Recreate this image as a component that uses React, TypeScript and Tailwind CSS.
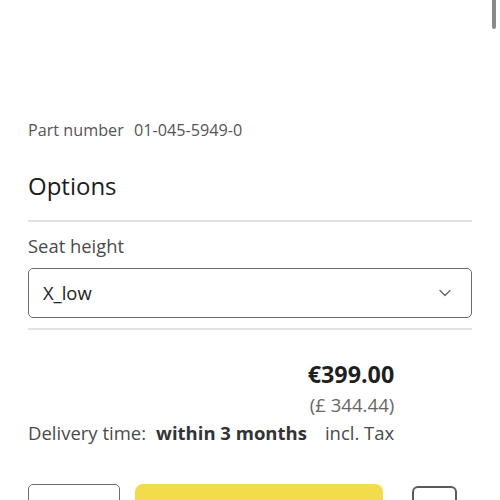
import { ChevronDown } from "lucide-react";

const font = { fontFamily: '"Open Sans", "Noto Sans", sans-serif' };

export default function App() {
  return (
    <div
      className="relative h-[500px] w-[500px] overflow-hidden bg-white px-7 pt-[118px]"
      style={font}
    >
      {/* page scroll thumb */}
      <div className="absolute right-[4px] top-0 h-[29px] w-[4px] rounded-b-full bg-[#8a8a8a]" />

      <p className="text-[16.2px] leading-6 text-[#555]">
        Part number <span className="ml-[6px]">01-045-5949-0</span>
      </p>

      <h2 className="mt-7 text-[24px] leading-8 text-[#1c1c1c]">Options</h2>

      <div className="mt-[18px] h-[2px] bg-[#e2e2e2]" />

      <label className="mt-[10px] block text-[18.4px] leading-7 text-[#4a4a4a]">Seat height</label>
      <div className="mt-2 flex h-[50px] items-center justify-between rounded-[5px] border border-[#6b6b6b] pl-[14px] pr-[16px]">
        <span className="text-[18.4px] text-[#222]">X_low</span>
        <ChevronDown className="h-[20px] w-[20px] text-[#666]" strokeWidth={1.6} />
      </div>

      <div className="mt-[10px] h-[2px] bg-[#e2e2e2]" />

      <div className="mt-[29px] w-fit">
        <div className="text-right text-[23.3px] font-bold leading-[30px] text-[#1f1f1f]">€399.00</div>
        <div className="mt-[2px] text-right text-[18.6px] leading-7 text-[#666]">(£ 344.44)</div>
        <div className="flex text-[18.5px] leading-7 text-[#4a4a4a]">
          <span>Delivery time:</span>
          <span className="ml-[10px] font-bold text-[#333]">within 3 months</span>
          <span className="ml-[18px]">incl. Tax</span>
        </div>
      </div>

      <div className="mt-[37px] flex items-start">
        <div className="h-[50px] w-[92px] rounded-[5px] border border-[#6b6b6b]" />
        <div className="ml-[15px] h-[50px] w-[248px] rounded-[8px] bg-[#f3dc4b]" />
        <div className="ml-[29px] mt-[2px] h-[46px] w-[45px] rounded-[6px] border-2 border-[#5a5a5a]" />
      </div>
    </div>
  );
}
